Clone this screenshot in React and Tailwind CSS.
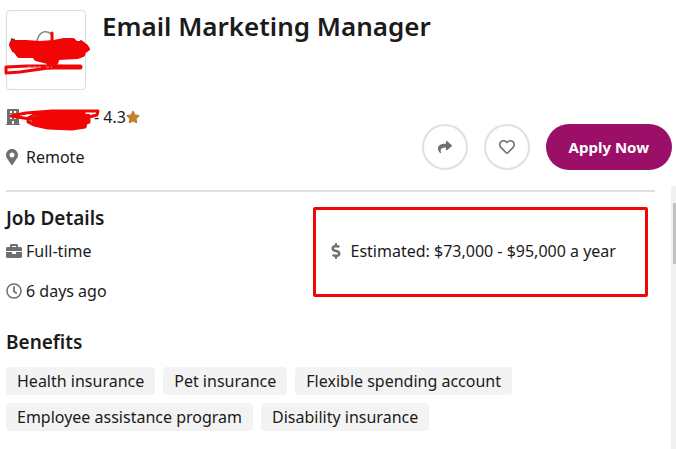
import { FaBriefcase, FaBuilding, FaDollarSign, FaMapMarkerAlt, FaRegClock, FaRegHeart, FaShare, FaStar } from 'react-icons/fa'

const benefits = [
  'Health insurance',
  'Pet insurance',
  'Flexible spending account',
  'Employee assistance program',
  'Disability insurance',
]

function Logo() {
  return (
    <div className="relative size-20 shrink-0 rounded border border-[#dcdcdc] bg-white">
      <svg className="absolute -left-[7px] -top-px h-20 w-24 max-w-none" viewBox="0 10 96 80" fill="none" aria-hidden="true">
        <path d="M37 41c2-8 6-10 10-9 2 0 4 2 5 4" stroke="#7d858d" strokeWidth="1.5" />
        <path d="M11 39l3 1v3M13 46v6M80 41l3 1" stroke="#2f4a57" strokeWidth="2" />
        {/* marker over the wordmark */}
        <path d="M52 33v8" stroke="#f20505" strokeWidth="3" strokeLinecap="round" />
        <path d="M12 42L26 42L40 43L54 42L64 40L73 40L76 43L82 43L86 46L88 49L84 52L83 55L78 57L58 58L57 60L48 62L36 59L34 56L19 56L16 52L13 49L11 45Z" stroke="#f20505" strokeWidth="4" strokeLinejoin="round" fill="#f20505" />
        <path d="M80 67L50 66L27 66L6 67L6 73L20 72L34 70L52 67.500L80 67" stroke="#f20505" strokeWidth="3" strokeLinecap="round" strokeLinejoin="round" />
        <path d="M48 60L50 66L56 62M50 67L80 67" stroke="#f20505" strokeWidth="5" strokeLinecap="round" />
        <path d="M28 67H43M46 67H52" stroke="#dba0a0" strokeWidth="1" strokeDasharray="3 2" />
      </svg>
    </div>
  )
}

function CompanyScribble() {
  return (
    <svg className="absolute -left-[6px] top-0 h-7 w-[104px] max-w-none" viewBox="0 105 104 28" fill="none" aria-hidden="true">
      <path d="M28 121l4 2 3-2M88 114l0 8" stroke="#333" strokeWidth="2" />
      <path d="M30 119L42 112L90 114L89 120L86 127L70 129L48 128L34 124Z" fill="#f20505" />
      <path d="M11 116L26 113L52 111L98 111L97 115L89 117L89 122L86 123L85 127L72 129L48 128L34 125L28 122L28 118L36 114L84 113L76 118L30 119Z" stroke="#f20505" strokeWidth="3" strokeLinejoin="round" />
    </svg>
  )
}

export default function App() {
  return (
    <div className="bg-white font-['Noto_Sans',sans-serif] text-base leading-6 text-[#1b1b1b]">
      <header className="pb-4 pl-[6px] pr-1 pt-[10px]">
        <div className="flex gap-4">
          <Logo />
          <h1 className="text-[26px] font-semibold leading-8">Email Marketing Manager</h1>
        </div>

        <div className="mt-[15px] flex items-end justify-between">
          <div className="flex flex-col gap-4 pb-px">
            <div className="relative flex items-center">
              <FaBuilding className="h-4 w-[14px] text-[#6f6f6f]" />
              <CompanyScribble />
              <span className="ml-[74px]">- 4.3</span>
              <FaStar className="size-[14px] text-[#c18230]" />
            </div>
            <div className="flex items-center gap-2">
              <FaMapMarkerAlt className="h-4 w-3 text-[#6f6f6f]" />
              <span>Remote</span>
            </div>
          </div>

          <div className="flex gap-4">
            <button type="button" aria-label="Share" className="flex size-[46px] items-center justify-center rounded-full border-2 border-[#e0e0e0]">
              <FaShare className="size-[14px] text-[#6f6f6f]" />
            </button>
            <button type="button" aria-label="Save job" className="flex size-[46px] items-center justify-center rounded-full border-2 border-[#e0e0e0]">
              <FaRegHeart className="size-4 text-[#6f6f6f]" />
            </button>
            <button type="button" className="h-[46px] rounded-full bg-[#9b0f69] px-[23px] text-[15px] font-bold text-white">
              Apply Now
            </button>
          </div>
        </div>
      </header>

      <div className="flex">
        <main className="mr-4 flex-1 pb-[18px] pl-[6px] pt-1">
          <hr className="border-t-2 border-[#e0e0e0]" />

          <section className="mt-[14px]">
            <h2 className="text-[19px] font-semibold leading-6">Job Details</h2>
            <div className="mt-[9px] grid grid-cols-2">
              <div className="flex flex-col gap-4">
                <div className="flex items-center gap-1">
                  <FaBriefcase className="size-4 text-[#6f6f6f]" />
                  <span>Full-time</span>
                </div>
                <div className="flex items-center gap-1">
                  <FaRegClock className="size-4 text-[#6f6f6f]" />
                  <span>6 days ago</span>
                </div>
              </div>
              <div className="relative flex items-center gap-[10px] self-start">
                <FaDollarSign className="h-4 w-[10px] text-[#6f6f6f]" />
                <span>Estimated: $73,000 - $95,000 a year</span>
                <div className="absolute -bottom-[34px] -left-[18px] -top-8 right-[7px] rounded-xs border-3 border-[#f20505]" />
              </div>
            </div>
          </section>

          <section className="mt-[27px]">
            <h2 className="text-[19px] font-semibold leading-6">Benefits</h2>
            <ul className="mt-[13px] flex flex-wrap gap-2">
              {benefits.map((b) => (
                <li key={b} className="h-7 rounded bg-[#f3f3f3] px-[11px] leading-7">{b}</li>
              ))}
            </ul>
          </section>
        </main>

        {/* scrollbar */}
        <div className="w-[5px] bg-[#f1f1f1] pl-0.5 pt-[17px]">
          <div className="h-[61px] bg-[#c1c1c1]" />
        </div>
      </div>
    </div>
  )
}
